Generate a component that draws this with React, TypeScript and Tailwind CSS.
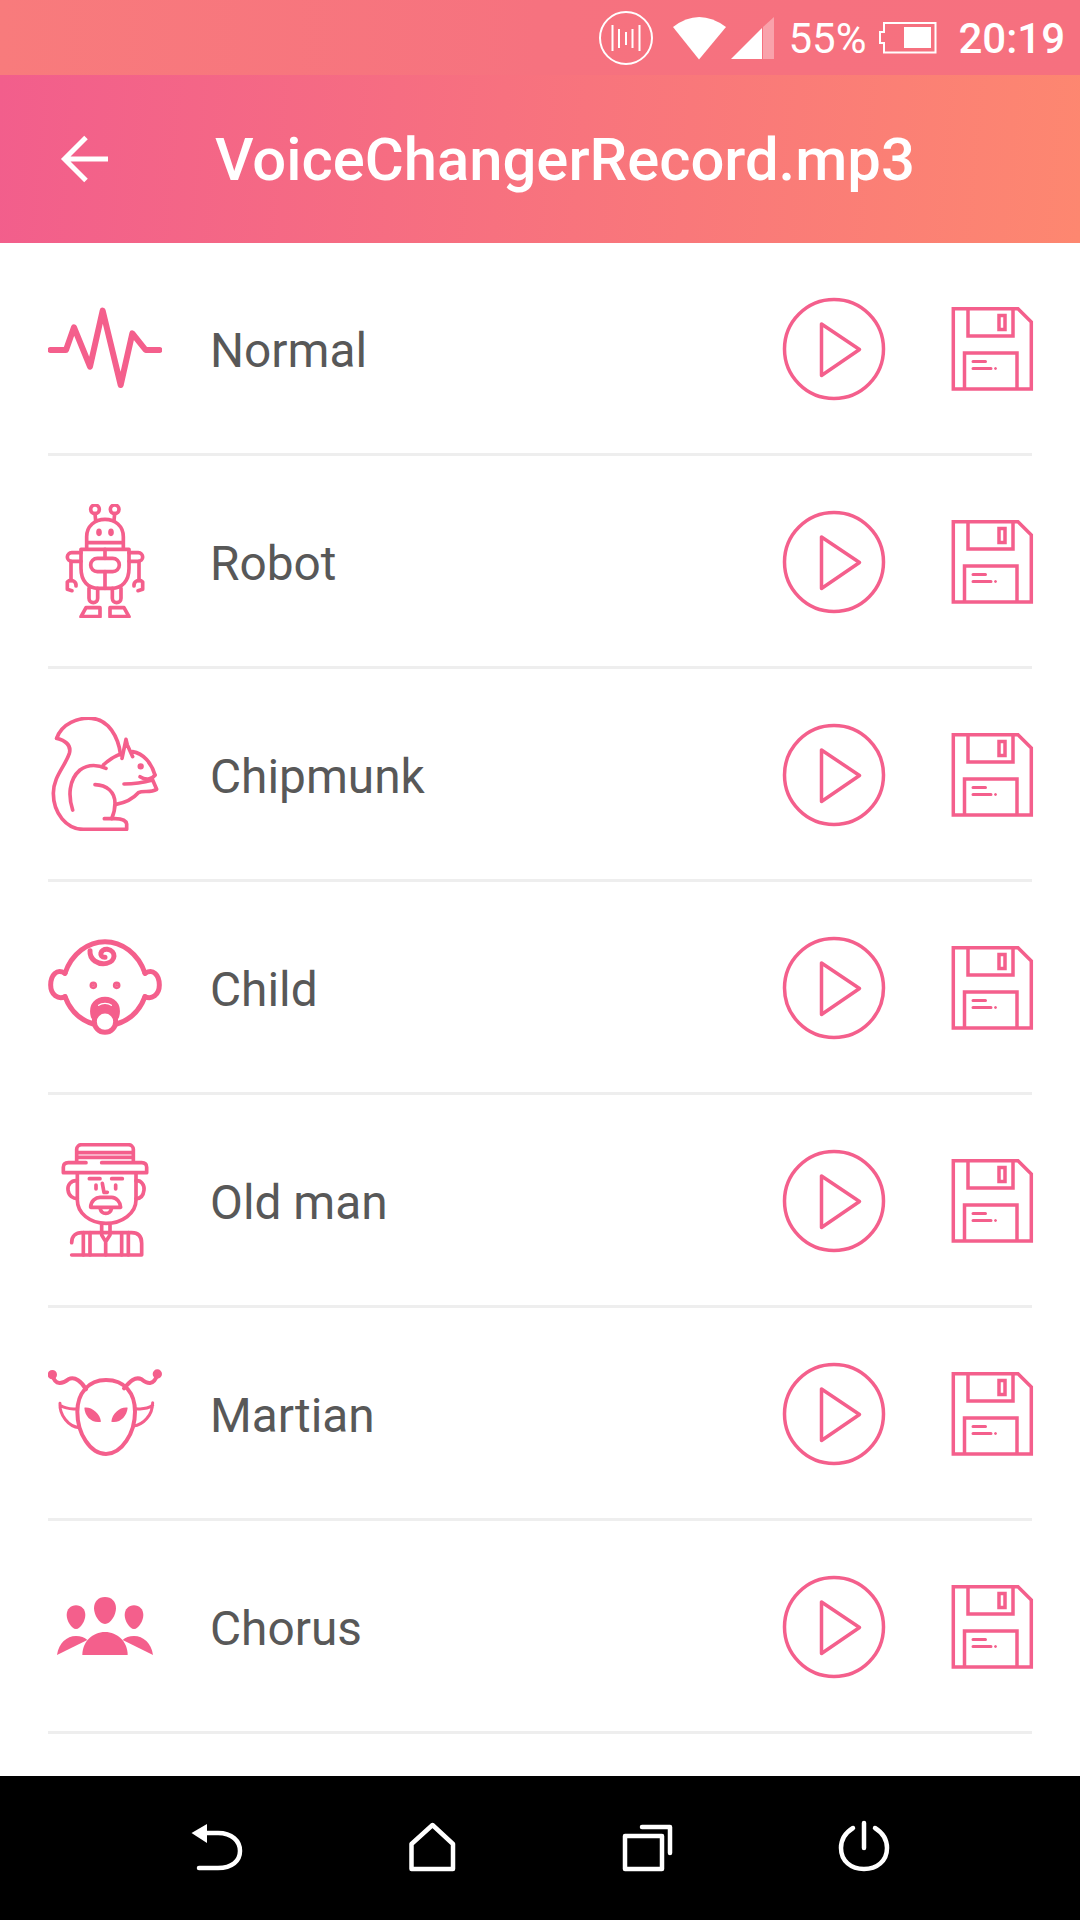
import type { ReactNode } from 'react';

const PINK = '#f45f8c';

// Voice icons are traced in their own 342 unit box, 3 units = 1px on screen
function VoiceIcon({ box, width = 11, children }: { box: string; width?: number; children: ReactNode }) {
  return (
    <svg
      viewBox={box}
      fill="none"
      stroke={PINK}
      strokeWidth={width}
      strokeLinecap="round"
      strokeLinejoin="round"
      className="w-[114px] h-[114px] shrink-0"
    >
      {children}
    </svg>
  );
}

const NormalIcon = () => (
  <VoiceIcon box="144 63 342 342" width={18}>
    <path d="M152 240 H198 L222 172 L270 290 L308 122 L362 345 L397 190 L437 240 H478" />
  </VoiceIcon>
);

const RobotIcon = () => (
  <VoiceIcon box="144 702 342 342">
    <circle cx="285" cy="718" r="13" />
    <circle cx="344" cy="718" r="13" />
    <path d="M285 731 L287 752 M344 731 L342 752" />
    <path d="M260 835 V800 C260 768 285 748 315 748 C345 748 370 768 370 800 V835 M260 818 H370" />
    <ellipse cx="297" cy="787" rx="3" ry="6" />
    <ellipse cx="333" cy="787" rx="3" ry="6" />
    <path d="M243 838 H387 V895 C387 935 365 955 335 955 H295 C265 955 243 935 243 895 Z" />
    <path d="M315 838 V865 M315 905 V955" />
    <rect x="272" y="865" width="86" height="40" rx="20" />
    <path d="M243 848 H215 A13 13 0 1 0 215 874 H243 M387 848 H415 A13 13 0 1 1 415 874 H387" />
    <path d="M213 874 V932 M417 874 V932" />
    <path d="M228 948 A15 15 0 0 0 202 936 V958 L216 962 M402 948 A15 15 0 0 1 428 936 V958 L414 962" />
    <path d="M267 955 V985 A13 13 0 0 0 293 985 V955 M337 955 V985 A13 13 0 0 0 363 985 V955" />
    <path d="M243 1040 L258 1013 H300 V1040 Z M330 1013 H372 L387 1040 H330 Z" />
  </VoiceIcon>
);

const ChipmunkIcon = () => (
  <VoiceIcon box="144 51 342 342">
    <path d="M170 115 C185 70 235 52 275 55 C325 58 355 110 362 165" />
    <path d="M170 115 C195 122 215 135 208 160 C195 200 160 230 160 280 C160 340 200 388 250 388 H380 V372 C378 360 365 356 345 356 H313" />
    <path d="M218 330 C205 290 205 240 240 210 C265 192 295 195 318 205" />
    <path d="M285 254 C320 255 345 275 345 310 C345 330 340 345 335 356" />
    <path d="M310 195 C330 175 345 168 365 160 M366 175 L378 118 L382 135 L398 170 M398 155 C430 160 455 190 465 225" />
    <path d="M420 230 C435 240 455 240 465 225 M372 252 C400 252 440 245 458 240 L470 268 C450 280 430 270 415 278 C400 295 375 308 348 313" />
    <circle cx="422" cy="199" r="4" fill={PINK} />
  </VoiceIcon>
);

const ChildIcon = () => (
  <VoiceIcon box="144 690 342 342" width={15}>
    <path d="M195 820 C215 760 265 725 315 725 C365 725 415 760 435 820" />
    <path d="M195 890 C210 930 240 960 280 972 M350 972 C390 960 420 930 435 890" />
    <path d="M195 820 C170 805 152 825 152 855 C152 885 175 900 195 890 M435 820 C460 805 478 825 478 855 C478 885 455 900 435 890" />
    <path d="M270 752 C268 780 295 795 320 790 C348 785 350 752 322 748 C300 746 295 772 315 772" />
    <circle cx="280" cy="856" r="4" fill={PINK} />
    <circle cx="350" cy="856" r="4" fill={PINK} />
    <path d="M280 950 C270 912 295 898 315 898 C335 898 360 912 350 950 Z" fill={PINK} />
    <path d="M296 916 C306 908 324 908 334 916" stroke="white" strokeWidth={4} />
    <circle cx="315" cy="965" r="32" fill="white" />
  </VoiceIcon>
);

const OldManIcon = () => (
  <VoiceIcon box="144 69 342 342">
    <path d="M230 125 V88 C230 80 237 74 245 74 H385 C393 74 400 80 400 88 V125 M232 98 H398 M232 112 H398" />
    <path d="M258 128 H205 C195 128 190 134 190 142 V158 H440 V142 C440 134 435 128 425 128 H305" />
    <path d="M232 160 V240 C232 280 270 310 318 310 C366 310 408 280 408 240 V160" />
    <path d="M232 182 C212 180 202 196 204 210 C206 228 220 236 232 236 M408 182 C424 180 434 196 432 210 C430 228 420 236 408 236" />
    <path d="M268 176 H300 M335 176 H367 M288 195 V207 M347 195 V207 M307 190 L312 217 H322" />
    <path d="M272 262 C272 242 288 232 300 232 H335 C350 232 362 248 362 262 Z M300 265 C305 285 330 285 335 265" />
    <path d="M305 315 V345 L317 365 L330 345 V315 M317 365 V405" />
    <path d="M215 368 C215 348 228 338 245 338 H395 C415 338 425 350 425 370 V405 H215" />
    <path d="M250 338 V405 M270 338 V405 M365 340 V405 M385 338 V405" />
  </VoiceIcon>
);

const MartianIcon = () => (
  <VoiceIcon box="144 48 342 342" width={12}>
    <path d="M318 120 C375 120 405 160 405 215 C405 280 365 342 318 342 C270 342 232 280 232 215 C232 160 265 120 318 120 Z" />
    <path d="M157 104 C165 140 190 130 205 118 C225 108 245 125 258 148 M472 102 C462 140 440 130 425 118 C405 108 390 125 372 145" />
    <circle cx="157" cy="104" r="8" fill={PINK} />
    <circle cx="472" cy="102" r="8" fill={PINK} />
    <path d="M180 190 C178 225 205 260 238 263 M180 196 C195 205 215 208 232 206 M458 188 C458 225 430 255 400 258 M458 196 C445 205 425 208 408 206" strokeWidth={9} />
    <path d="M253 203 C275 200 300 220 303 245 C275 250 255 230 253 203 Z M383 203 C360 200 337 220 334 245 C360 250 380 230 383 203 Z" fill={PINK} stroke="none" />
  </VoiceIcon>
);

const ChorusIcon = () => (
  <VoiceIcon box="144 27 342 342" width={0}>
    <g fill={PINK} stroke="none">
      <path d="M315 111 C335 111 348 125 348 145 C348 165 332 192 315 192 C298 192 282 165 282 145 C282 125 295 111 315 111 Z" />
      <path d="M228 136 C244 136 256 148 256 165 C256 182 242 207 228 207 C214 207 200 182 200 165 C200 148 212 136 228 136 Z" />
      <path d="M402 136 C418 136 430 148 430 165 C430 182 416 207 402 207 C388 207 374 182 374 165 C374 148 386 136 402 136 Z" />
      <path d="M247 285 C247 245 278 216 315 216 C352 216 383 245 383 285 Z" />
      <path d="M171 285 C176 250 200 228 228 228 C242 228 254 232 262 240 Z" />
      <path d="M459 285 C454 250 430 228 402 228 C388 228 376 232 368 240 Z" />
    </g>
  </VoiceIcon>
);

const PlayIcon = () => (
  <svg viewBox="0 0 104 104" fill="none" stroke={PINK} strokeWidth="3.5" strokeLinejoin="round" className="w-[104px] h-[104px] shrink-0 mt-[2px]">
    <circle cx="52" cy="52" r="49.5" />
    <path d="M39.5 27 V78.5 L77.5 52.5 Z" />
  </svg>
);

const SaveIcon = () => (
  <svg viewBox="952 306 84 86" fill="none" stroke={PINK} strokeWidth="3.5" className="w-[84px] h-[86px] shrink-0 mt-[2px]">
    <path d="M954.3 308.800 H1019 L1032.300 322 V389 H954.300 Z" />
    <path d="M969 310 V336 H1014 V310" />
    <rect x="1000" y="315.5" width="6" height="14" />
    <path d="M965.5 388 V353 H1018 V388" />
    <path d="M974 361.5 H986.5 M974 368.5 H992" strokeWidth="3" strokeLinecap="round" />
    <circle cx="996.500" cy="368.5" r="1" fill={PINK} strokeWidth="1" />
  </svg>
);

const voices = [
  { name: 'Normal', icon: <NormalIcon /> },
  { name: 'Robot', icon: <RobotIcon /> },
  { name: 'Chipmunk', icon: <ChipmunkIcon /> },
  { name: 'Child', icon: <ChildIcon /> },
  { name: 'Old man', icon: <OldManIcon /> },
  { name: 'Martian', icon: <MartianIcon /> },
  { name: 'Chorus', icon: <ChorusIcon /> },
];

function StatusBar() {
  return (
    <div className="h-[75px] shrink-0 flex items-center justify-end pr-[15px] bg-[linear-gradient(90deg,#f87b7c,#f6727f_50%,#f6707f)] text-white">
      <svg viewBox="599 9 56 56" fill="none" stroke="white" strokeWidth="2" className="w-[56px] h-[56px]">
        <circle cx="627" cy="37" r="26" />
        <path d="M613.500 24 V50 M620 28 V47 M627 31 V44 M633.500 28 V47 M640.500 24 V50" />
      </svg>
      <svg viewBox="673 14 55 46" fill="white" className="w-[55px] h-[46px] ml-[18px]">
        <path d="M674 26 Q700 6 727 26 L700 58.500 Z" />
      </svg>
      <svg viewBox="732 16 43 44" className="w-[43px] h-[44px] ml-[4px]">
        <path d="M732 59 L763 28 V59 Z" fill="white" />
        <path d="M764 27 L775 17 V59 H764 Z" fill="white" fillOpacity="0.35" />
      </svg>
      <span className="ml-[14px] pt-[3px] text-[42px] leading-none font-['Roboto',sans-serif]">55%</span>
      <svg viewBox="879 21 58 33" fill="none" stroke="white" strokeWidth="2" className="w-[58px] h-[33px] ml-[13px]">
        <path d="M884 23 H935.500 V52.500 H884 V43 H880 V32 H884 Z" />
        <rect x="904" y="27" width="27" height="21" fill="white" stroke="none" />
      </svg>
      <span className="ml-[21px] pt-[3px] text-[42px] leading-none font-medium font-['Roboto',sans-serif]">20:19</span>
    </div>
  );
}

function Header() {
  return (
    <div className="h-[168px] shrink-0 flex items-center pl-[60px] bg-[linear-gradient(95deg,#f25e8c,#fd8770)]">
      <svg viewBox="60 135 50 48" fill="none" stroke="white" strokeWidth="5" className="w-[50px] h-[48px]">
        <path d="M108 159 H64 M86 137.500 L64.500 159 L86 180.500" />
      </svg>
      <h1 className="ml-[105px] pt-[3px] text-[59.8px] leading-none text-white font-medium font-['Roboto',sans-serif]">
        VoiceChangerRecord.mp3
      </h1>
    </div>
  );
}

function VoiceRow({ name, icon }: { name: string; icon: ReactNode }) {
  return (
    <div className="h-[213px] mx-[48px] flex items-center border-b-[3px] border-[#eeeeee]">
      {icon}
      <span className="ml-[48px] pt-[7px] text-[47.8px] leading-none text-[#585858] font-['Roboto',sans-serif]">{name}</span>
      <div className="ml-auto flex items-center gap-[65px] -mr-[3px]">
        <PlayIcon />
        <SaveIcon />
      </div>
    </div>
  );
}

function NavBar() {
  return (
    <div className="h-[144px] shrink-0 bg-black flex items-start pl-[186px] pt-[40px] gap-[156px]">
      <svg viewBox="186 1816 60 60" fill="none" stroke="white" strokeWidth="4.500" strokeLinecap="round" strokeLinejoin="round" className="w-[60px] h-[60px]">
        <path d="M207 1824 V1843 L191.500 1833 Z" fill="white" stroke="none" />
        <path d="M206 1833 H218 C232 1833 240 1841 240 1851 C240 1861 232 1868 218 1868 H199" />
      </svg>
      <svg viewBox="402 1816 60 60" fill="none" stroke="white" strokeWidth="4.500" strokeLinejoin="round" className="w-[60px] h-[60px]">
        <path d="M432.500 1825 L453 1844 V1869 H411.500 V1844 Z" />
      </svg>
      <svg viewBox="618 1816 60 60" fill="none" stroke="white" strokeWidth="4.500" strokeLinecap="round" strokeLinejoin="round" className="w-[60px] h-[60px]">
        <rect x="625" y="1836" width="37" height="33" />
        <path d="M642 1827 H670 V1853" />
      </svg>
      <svg viewBox="834 1816 60 60" fill="none" stroke="white" strokeWidth="4.500" strokeLinecap="round" className="w-[60px] h-[60px]">
        <path d="M853 1828 C845 1833 841 1840 841 1848 C841 1861 851 1869 864 1869 C877 1869 887 1861 887 1848 C887 1840 883 1833 875 1828" />
        <path d="M864 1823 V1848" />
      </svg>
    </div>
  );
}

export default function App() {
  return (
    <div className="w-[1080px] h-[1920px] flex flex-col bg-white overflow-hidden">
      <StatusBar />
      <Header />
      <div className="flex-1">
        {voices.map((voice) => (
          <VoiceRow key={voice.name} name={voice.name} icon={voice.icon} />
        ))}
      </div>
      <NavBar />
    </div>
  );
}
